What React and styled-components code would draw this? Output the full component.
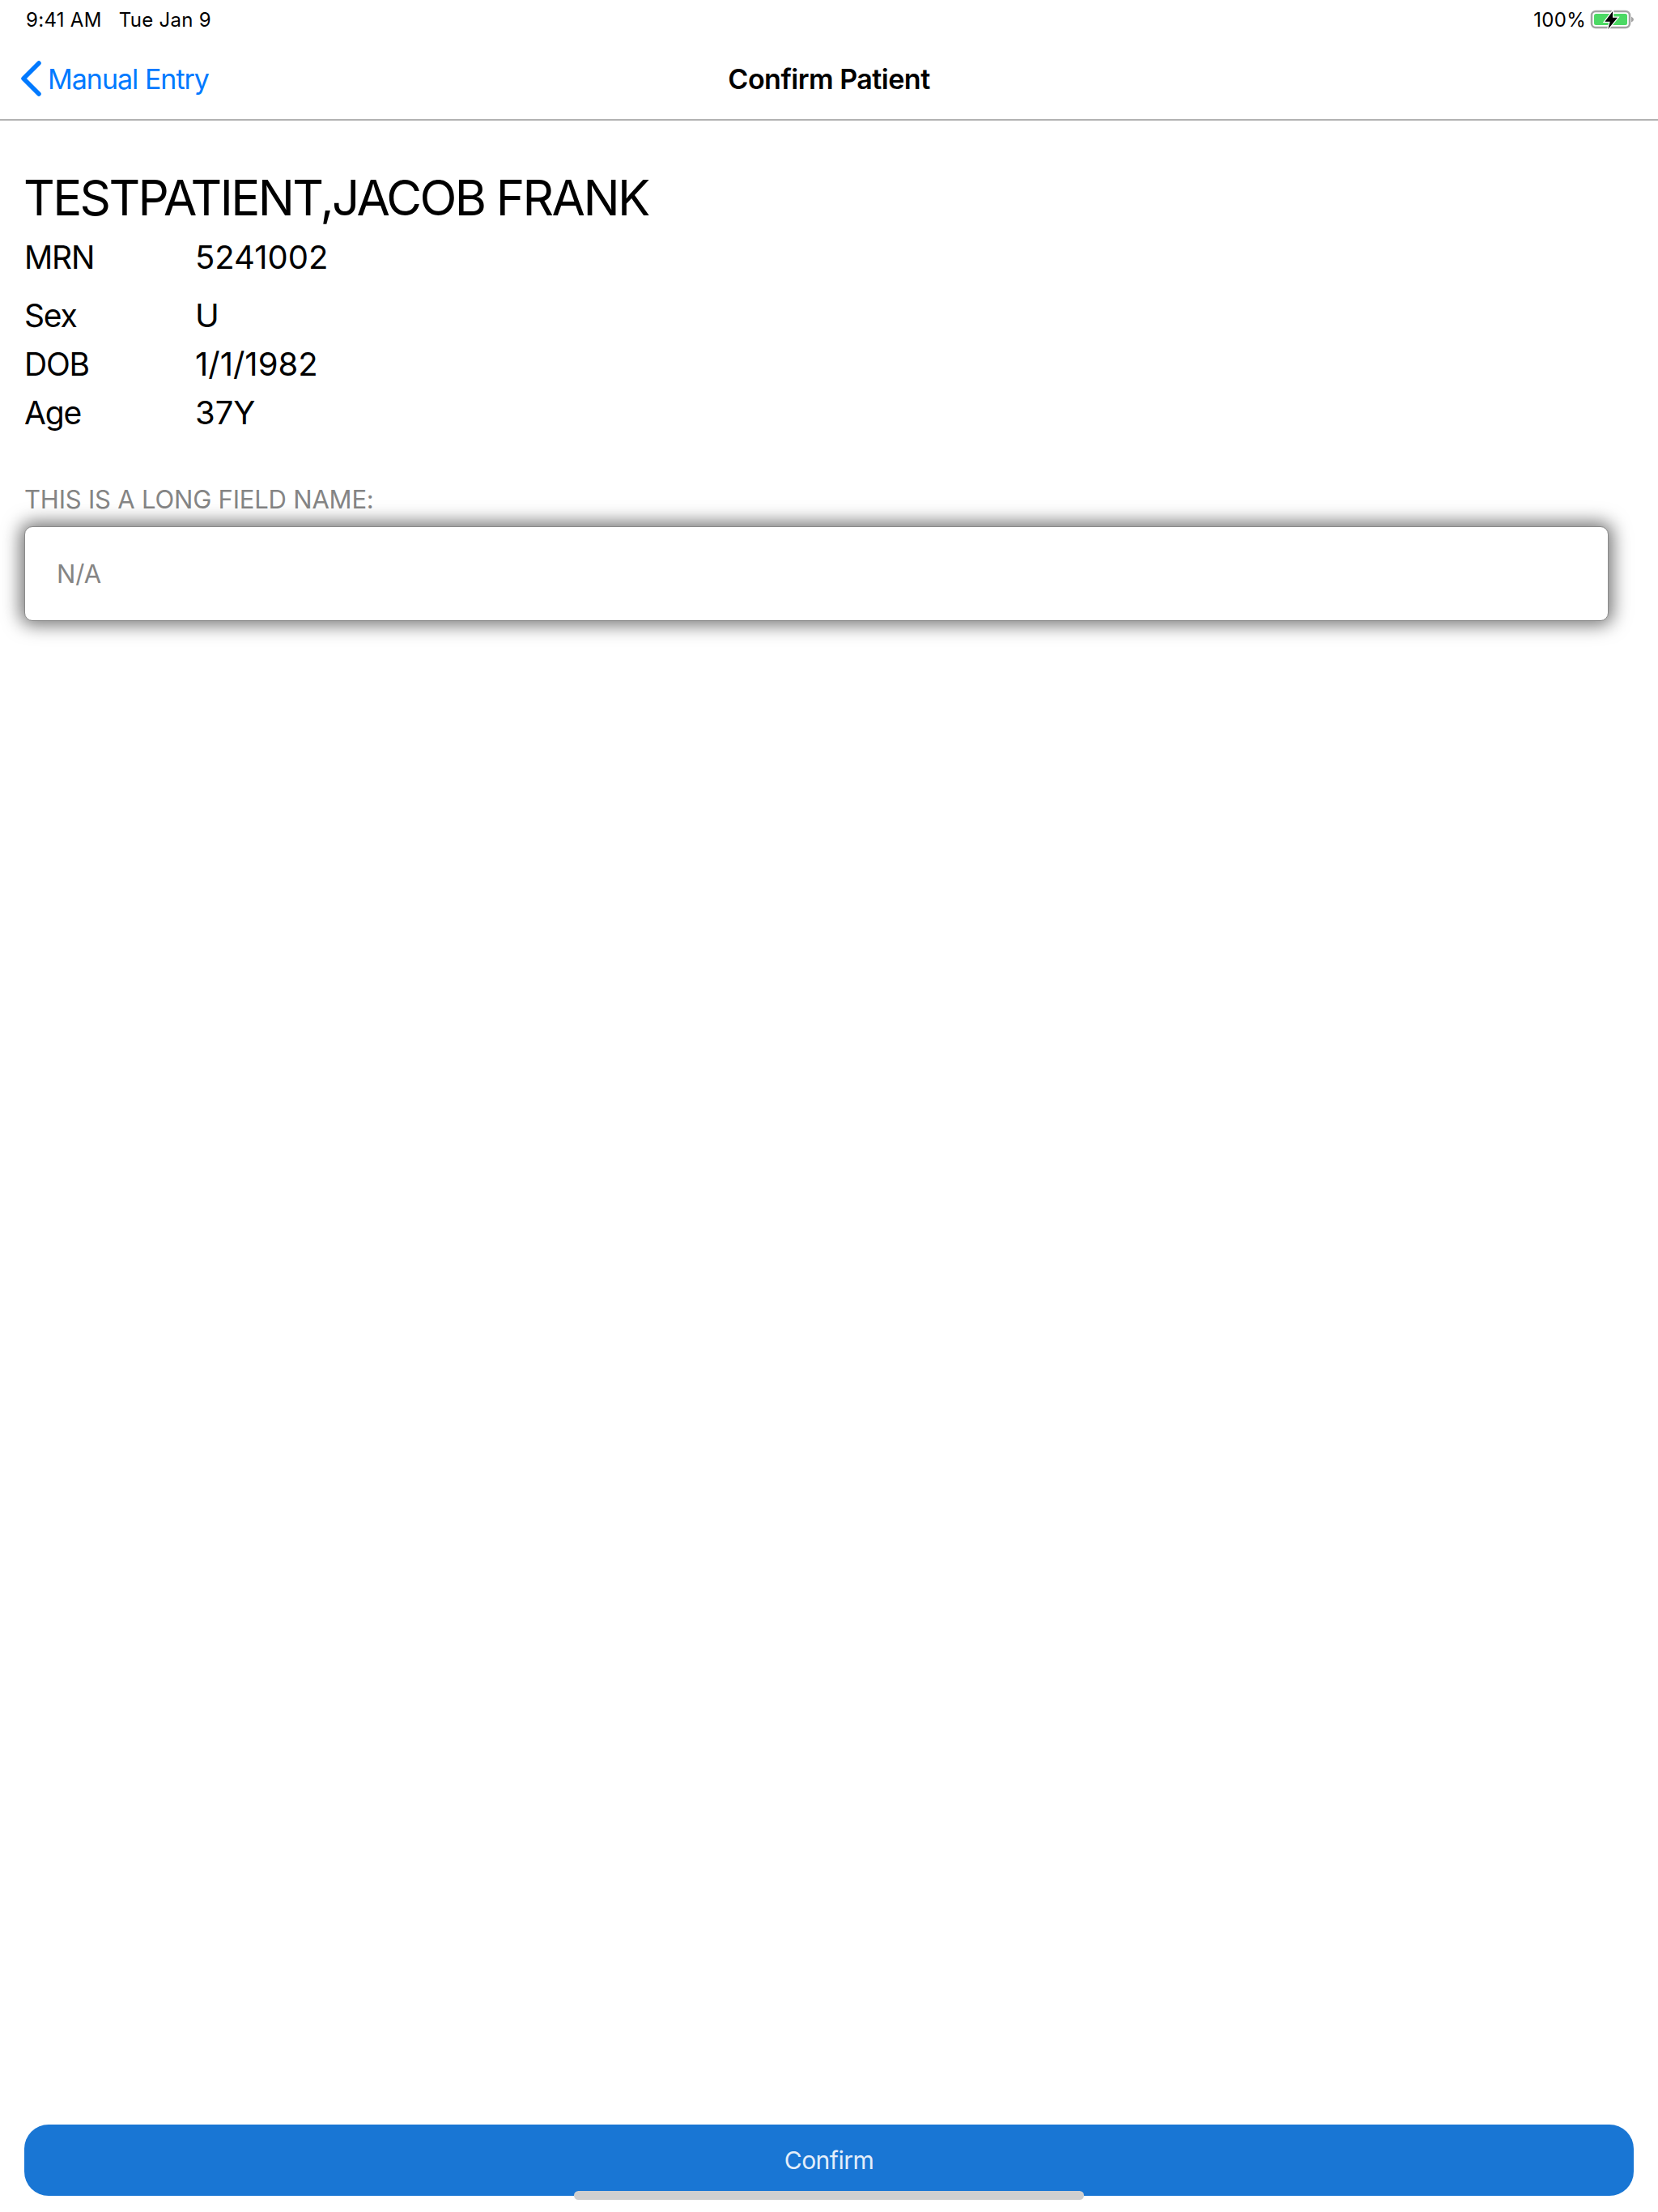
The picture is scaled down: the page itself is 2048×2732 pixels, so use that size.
import React from 'react'
import styled, { createGlobalStyle } from 'styled-components'

const GlobalStyle = createGlobalStyle`
  html, body { margin: 0; padding: 0; background: #fff; }
  * { box-sizing: border-box; }
`

const Page = styled.div`
  position: relative;
  width: 2048px;
  height: 2732px;
  display: flex;
  flex-direction: column;
  background: #fff;
  color: #000;
  font-family: Inter, "Liberation Sans", sans-serif;
  overflow: hidden;
`

const StatusBar = styled.div`
  height: 48px;
  padding: 0 30px 0 32px;
  display: flex;
  align-items: center;
  justify-content: space-between;
  font-size: 24px;
  letter-spacing: 0.3px;
`

const StatusLeft = styled.div`
  display: flex;
  gap: 21px;
`

const StatusRight = styled.div`
  display: flex;
  align-items: center;
  gap: 5px;
`

const NavBar = styled.div`
  position: relative;
  height: 101px;
  display: flex;
  align-items: center;
  justify-content: center;
  border-bottom: 2px solid #b2b2b2;
  padding-bottom: 2px;
`

const BackLink = styled.div`
  position: absolute;
  left: 26px;
  top: 0;
  bottom: 2px;
  display: flex;
  align-items: center;
  gap: 7px;
  color: #007aff;
  font-size: 34px;
  letter-spacing: -1px;
`

const BackLabel = styled.span`
  margin-top: 2px;
`

const NavTitle = styled.div`
  margin-top: 2px;
  font-size: 34px;
  font-weight: 600;
  letter-spacing: -0.5px;
`

const Content = styled.div`
  flex: 1;
  display: flex;
  flex-direction: column;
  padding: 60px 30px 0;
`

const PatientName = styled.div`
  margin: 0 0 9px -1px;
  font-size: 60px;
  line-height: 70px;
  letter-spacing: -2.6px;
`

const InfoRow = styled.div`
  display: grid;
  grid-template-columns: 211px 1fr;
  font-size: 40px;
  line-height: 60px;
  margin-top: ${(p) => p.$gap || 0}px;
`

const InfoLabel = styled.span`
  font-size: 39px;
  letter-spacing: -1.2px;
`

const FieldLabel = styled.div`
  margin-top: 57px;
  font-size: 31px;
  line-height: 40px;
  letter-spacing: -0.2px;
  color: #858585;
`

const FieldBox = styled.div`
  margin-top: 13px;
  width: 1957px;
  height: 117px;
  padding-left: 39px;
  display: flex;
  align-items: center;
  background: #fff;
  border-radius: 10px;
  border: 1px solid #8a8a8a;
  box-shadow: 0 0 22px 5px rgba(0, 0, 0, 0.55);
  color: #858585;
  font-size: 31px;
`

const ConfirmButton = styled.button`
  margin: 0 30px 20px;
  width: 1988px;
  height: 88px;
  border: 0;
  border-radius: 30px;
  background: #1976d4;
  color: #e4eefa;
  font-family: inherit;
  font-size: 30px;
  letter-spacing: -0.5px;
`

const HomeIndicator = styled.div`
  position: absolute;
  left: 709px;
  bottom: 15px;
  width: 630px;
  height: 11px;
  border-radius: 6px;
  background: #cfcfcf;
`

const BackChevron = () => (
  <svg width="26" height="44" viewBox="0 0 26 44">
    <path d="M22 3 L3 22 L22 41" fill="none" stroke="#007aff" strokeWidth="5.5" strokeLinecap="round" strokeLinejoin="round" />
  </svg>
)

const Battery = () => (
  <svg width="54" height="26" viewBox="0 0 54 26">
    <rect x="2" y="3" width="47" height="20" rx="5" fill="none" stroke="#a3a3a3" strokeWidth="2.5" />
    <rect x="5" y="6" width="41" height="14" rx="2.5" fill="#4cd964" />
    <path d="M51 9.5 Q54 11 54 13 Q54 15 51 16.5 Z" fill="#a3a3a3" />
    <path
      d="M28 3 L18.3 15.7 H24.7 L22.3 25 L34 10.7 H28 Z"
      fill="#000"
      stroke="#fff"
      strokeWidth="2.5"
      paintOrder="stroke"
    />
  </svg>
)

const info = [
  { label: 'MRN', value: '5241002' },
  { label: 'Sex', value: 'U', gap: 12 },
  { label: 'DOB', value: '1/1/1982' },
  { label: 'Age', value: '37Y' },
]

export default function App() {
  return (
    <Page>
      <GlobalStyle />
      <StatusBar>
        <StatusLeft>
          <span>9:41 AM</span>
          <span>Tue Jan 9</span>
        </StatusLeft>
        <StatusRight>
          <span>100%</span>
          <Battery />
        </StatusRight>
      </StatusBar>
      <NavBar>
        <BackLink>
          <BackChevron />
          <BackLabel>Manual Entry</BackLabel>
        </BackLink>
        <NavTitle>Confirm Patient</NavTitle>
      </NavBar>
      <Content>
        <PatientName>TESTPATIENT,JACOB FRANK</PatientName>
        {info.map((row) => (
          <InfoRow key={row.label} $gap={row.gap}>
            <InfoLabel>{row.label}</InfoLabel>
            <span>{row.value}</span>
          </InfoRow>
        ))}
        <FieldLabel>THIS IS A LONG FIELD NAME:</FieldLabel>
        <FieldBox>N/A</FieldBox>
      </Content>
      <ConfirmButton>Confirm</ConfirmButton>
      <HomeIndicator />
    </Page>
  )
}
